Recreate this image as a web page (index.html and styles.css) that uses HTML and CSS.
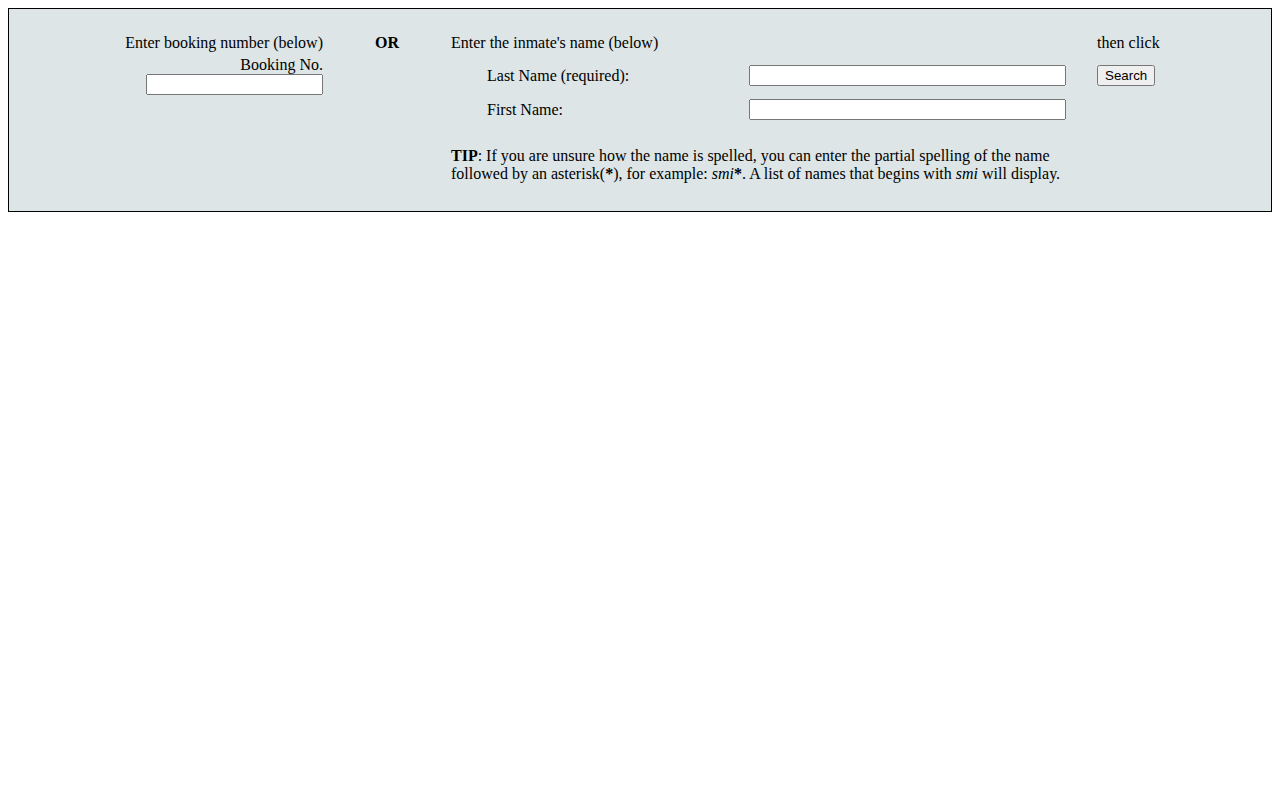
FILE: index.html
```html
<!DOCTYPE html>
<html>
<head>
<meta charset="utf-8">
<title>Inmate Search</title>
<link rel="stylesheet" href="styles.css">
</head>
<body>
<form class="search-box">
  <div class="col-booking">
    <div class="line">Enter booking number (below)</div>
    <div class="line booking-label">Booking No.</div>
    <input class="booking-input" type="text">
  </div>
  <div class="col-or"><b>OR</b></div>
  <div class="col-name">
    <div class="line">Enter the inmate's name (below)</div>
    <div class="name-grid">
      <label class="name-label">Last Name (required):</label>
      <input class="name-input" type="text">
      <label class="name-label">First Name:</label>
      <input class="name-input" type="text">
    </div>
    <p class="tip"><b>TIP</b>: If you are unsure how the name is spelled, you can enter the partial spelling of the name followed by an asterisk(<b>*</b>), for example: <i>smi</i><b>*</b>. A list of names that begins with <i>smi</i> will display.</p>
  </div>
  <div class="col-action">
    <div class="line">then click</div>
    <button class="search-btn" type="button">Search</button>
  </div>
</form>
</body>
</html>
```
FILE: styles.css
```css
html, body {
  margin: 0;
  padding: 0;
  background: #ffffff;
}
body {
  padding: 8px;
  font-family: "Liberation Serif", "Times New Roman", serif;
  font-size: 16px;
  color: #000;
}
.search-box {
  display: flex;
  align-items: flex-start;
  background: #dde5e6;
  border: 1px solid #000;
  box-sizing: border-box;
  height: 204px;
  padding-top: 25px;
  margin: 0;
}
.line {
  height: 18px;
  line-height: 18px;
}
.col-booking {
  width: 314px;
  display: flex;
  flex-direction: column;
  align-items: flex-end;
}
.booking-label {
  margin-top: 4px;
}
.booking-input {
  width: 177px;
  height: 21px;
  box-sizing: border-box;
  margin: 0;
  font-size: 13.333px;
}
.col-or {
  width: 76px;
  padding-left: 52px;
  line-height: 18px;
}
.col-name {
  width: 615px;
}
.name-grid {
  display: grid;
  grid-template-columns: 262px 317px;
  grid-auto-rows: 21px;
  row-gap: 13px;
  align-items: center;
  padding-left: 36px;
  margin-top: 13px;
}
.name-label {
  line-height: 18px;
}
.name-input {
  width: 317px;
  height: 21px;
  box-sizing: border-box;
  margin: 0;
  font-size: 13.333px;
}
.tip {
  margin: 27px 0 0 0;
  line-height: 18px;
}
.col-action {
  margin-left: 31px;
  display: flex;
  flex-direction: column;
  align-items: flex-start;
}
.search-btn {
  margin-top: 13px;
  height: 21px;
  box-sizing: border-box;
  font-family: "Liberation Sans", Arial, sans-serif;
  font-size: 13.333px;
  padding: 1px 6px;
}
```
